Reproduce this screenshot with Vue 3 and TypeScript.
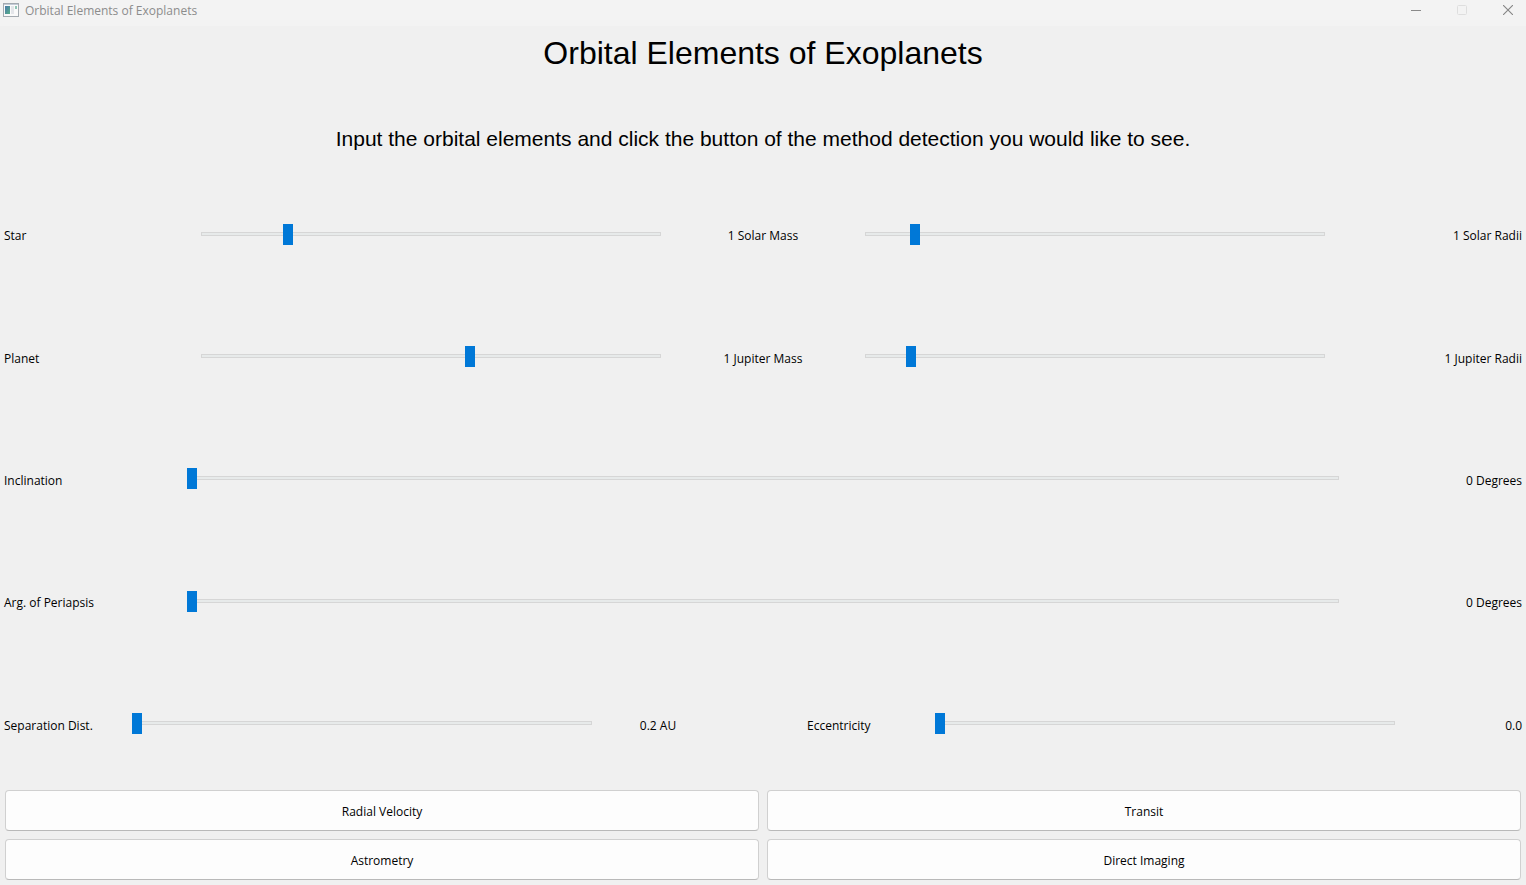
<script setup lang="ts">
import { reactive } from 'vue'

interface Quantity {
  id: string
  label: string
  caption?: string
  min: number
  max: number
  step: number
  value: number
  format: (v: number) => string
}

interface Row {
  id: string
  layout: 'pair' | 'single' | 'split'
  items: Quantity[]
}

const withUnit = (unit: string) => (v: number) => `${v} ${unit}`

const rows = reactive<Row[]>([
  {
    id: 'star',
    layout: 'pair',
    items: [
      { id: 'star-mass', label: 'Star mass', caption: 'Star', min: 0.1, max: 5, step: 0.1, value: 1, format: withUnit('Solar Mass') },
      { id: 'star-radius', label: 'Star radius', min: 0, max: 10, step: 0.1, value: 1, format: withUnit('Solar Radii') },
    ],
  },
  {
    id: 'planet',
    layout: 'pair',
    items: [
      { id: 'planet-mass', label: 'Planet mass', caption: 'Planet', min: 0, max: 1.695, step: 0.005, value: 1, format: withUnit('Jupiter Mass') },
      { id: 'planet-radius', label: 'Planet radius', min: 0, max: 11, step: 0.1, value: 1, format: withUnit('Jupiter Radii') },
    ],
  },
  {
    id: 'inclination-row',
    layout: 'single',
    items: [
      { id: 'inclination', label: 'Inclination', caption: 'Inclination', min: 0, max: 90, step: 1, value: 0, format: withUnit('Degrees') },
    ],
  },
  {
    id: 'periapsis-row',
    layout: 'single',
    items: [
      { id: 'periapsis', label: 'Argument of periapsis', caption: 'Arg. of Periapsis', min: 0, max: 360, step: 1, value: 0, format: withUnit('Degrees') },
    ],
  },
  {
    id: 'orbit-row',
    layout: 'split',
    items: [
      { id: 'separation', label: 'Separation distance', caption: 'Separation Dist.', min: 0.2, max: 50, step: 0.1, value: 0.2, format: withUnit('AU') },
      { id: 'eccentricity', label: 'Eccentricity', caption: 'Eccentricity', min: 0, max: 0.9, step: 0.1, value: 0, format: (v) => v.toFixed(1) },
    ],
  },
])

const methods = ['Radial Velocity', 'Transit', 'Astrometry', 'Direct Imaging']
</script>

<template>
  <div class="window">
    <header class="titlebar">
      <svg class="app-icon" width="16" height="14" viewBox="0 0 16 14" aria-hidden="true">
        <defs>
          <linearGradient id="pane" x1="0" y1="0" x2="1" y2="1">
            <stop offset="0" stop-color="#4a78a8" />
            <stop offset="1" stop-color="#58b08a" />
          </linearGradient>
        </defs>
        <rect x="0.5" y="0.5" width="15" height="13" fill="#fafafa" stroke="#a3aab0" />
        <rect x="1" y="1" width="14" height="1" fill="#c3cbd6" />
        <rect x="2" y="3" width="5" height="8" fill="url(#pane)" />
        <rect x="8" y="3" width="3" height="8" fill="#e4e6ea" />
        <rect x="12" y="3" width="2" height="3" fill="#8fc5b5" />
      </svg>
      <span class="window-title">Orbital Elements of Exoplanets</span>
      <div class="controls">
        <button type="button" aria-label="Minimize">
          <svg width="10" height="10" viewBox="0 0 10 10"><path d="M0 5.5H10" stroke="#8a8a8a" /></svg>
        </button>
        <button type="button" aria-label="Maximize" disabled>
          <svg width="10" height="10" viewBox="0 0 10 10"><rect x="0.5" y="0.5" width="9" height="9" rx="1" fill="none" stroke="#dedede" /></svg>
        </button>
        <button type="button" aria-label="Close">
          <svg width="10" height="10" viewBox="0 0 10 10"><path d="M0 0L10 10M10 0L0 10" stroke="#858585" stroke-width="1.1" /></svg>
        </button>
      </div>
    </header>

    <div class="intro">
      <h1>Orbital Elements of Exoplanets</h1>
      <p>Input the orbital elements and click the button of the method detection you would like to see.</p>
    </div>

    <main class="rows">
      <div v-for="row in rows" :key="row.id" class="row" :class="row.layout">
        <template v-for="(q, i) in row.items" :key="q.id">
          <span v-if="row.layout === 'split' && i > 0"></span>
          <label v-if="q.caption" :for="q.id">{{ q.caption }}</label>
          <input
            :id="q.id"
            v-model.number="q.value"
            type="range"
            :min="q.min"
            :max="q.max"
            :step="q.step"
            :aria-label="q.label"
          />
          <output :for="q.id" :class="{ last: i === row.items.length - 1 }">{{ q.format(q.value) }}</output>
        </template>
      </div>
    </main>

    <footer class="methods">
      <button v-for="m in methods" :key="m" type="button">{{ m }}</button>
    </footer>
  </div>
</template>

<style>
body {
  margin: 0;
  background: #f0f0f0;
}
</style>

<style scoped>
.window {
  display: flex;
  flex-direction: column;
  min-height: 100vh;
  background: #f0f0f0;
  color: #000;
  font: 12px/16px "Open Sans", "Noto Sans", sans-serif;
}

.titlebar {
  display: flex;
  align-items: center;
  height: 20px;
  padding: 0 0 6px 3px;
  background: #f3f3f3;
}

.app-icon {
  margin-right: 6px;
}

.window-title {
  padding-top: 2px;
  color: #8c8c8c;
}

.controls {
  display: flex;
  gap: 10px;
  margin-left: auto;
}

.controls button {
  display: grid;
  place-items: center;
  width: 36px;
  height: 20px;
  padding: 0;
  border: 0;
  background: none;
}

.intro {
  padding-bottom: 20px;
  font-family: "Liberation Sans", Arial, sans-serif;
  text-align: center;
}

h1 {
  margin: 0 0 44px;
  font-size: 32px;
  font-weight: 400;
  line-height: 54px;
}

p {
  margin: 0;
  font-size: 21px;
  line-height: 29px;
}

.rows {
  display: grid;
  flex: 1;
  grid-auto-rows: 1fr;
}

.row {
  display: grid;
  align-items: center;
  padding: 0 4px;
}

.pair {
  grid-template-columns: 197fr 460fr 204fr 460fr 197fr;
}

.single {
  grid-template-columns: 183fr 1152fr 183fr;
}

.split {
  grid-template-columns: 128fr 460fr 132fr 83fr 128fr 460fr 127fr;
}

label,
output {
  min-width: 0;
  padding-top: 4px;
  white-space: nowrap;
}

output {
  text-align: center;
}

output.last {
  text-align: right;
}

input[type='range'] {
  appearance: none;
  width: 100%;
  min-width: 0;
  height: 21px;
  margin: 0 0 1px;
  background: none;
}

input[type='range']::-webkit-slider-runnable-track {
  box-sizing: border-box;
  height: 4px;
  border: 1px solid #d6d6d6;
  background: #e7eaea;
}

input[type='range']::-webkit-slider-thumb {
  appearance: none;
  width: 10px;
  height: 21px;
  margin: -9px -1px 0;
  border: 0;
  border-radius: 0;
  background: #0078d7;
}

.methods {
  display: grid;
  grid-template-columns: 1fr 1fr;
  grid-auto-rows: 41px;
  gap: 8px;
  padding: 5px;
}

.methods button {
  padding: 2px 0 0;
  border: 1px solid #d0d0d0;
  border-bottom-color: #b9b9b9;
  border-radius: 4px;
  background: #fdfdfd;
  color: #000;
  font: inherit;
}
</style>
